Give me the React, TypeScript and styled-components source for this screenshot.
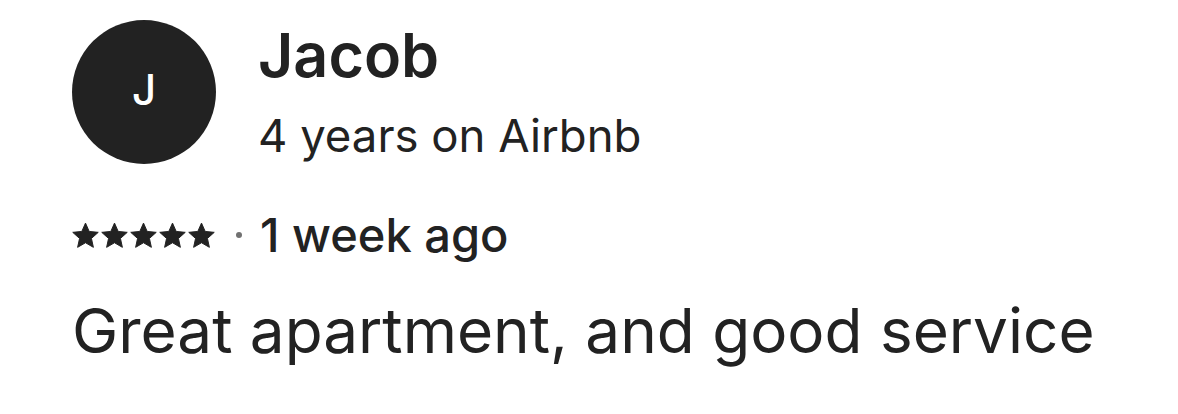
import React from 'react';
import styled, { createGlobalStyle } from 'styled-components';

const GlobalStyle = createGlobalStyle`
  html, body {
    margin: 0;
    padding: 0;
    background: #ffffff;
  }
  body {
    font-family: Inter, "Noto Sans", Arial, sans-serif;
    color: #222222;
  }
`;

const Review = styled.div`
  padding: 20px 0 0 72px;
  display: flex;
  flex-direction: column;
`;

const Header = styled.div`
  display: flex;
  align-items: flex-start;
  gap: 42px;
`;

const Avatar = styled.div`
  flex: none;
  width: 144px;
  height: 144px;
  border-radius: 50%;
  background: #222222;
  color: #ffffff;
  display: flex;
  align-items: center;
  justify-content: center;
  font-size: 42px;
  font-weight: 500;
  line-height: 1;
  padding-bottom: 4px;
  box-sizing: border-box;
`;

const HostInfo = styled.div`
  display: flex;
  flex-direction: column;
`;

const Name = styled.div`
  font-size: 61px;
  font-weight: 600;
  line-height: 70px;
`;

const Tenure = styled.div`
  margin-top: 18px;
  font-size: 45.5px;
  font-weight: 400;
  line-height: 56px;
`;

const MetaRow = styled.div`
  display: flex;
  align-items: center;
  margin-top: 43px;
  height: 56px;
`;

const Stars = styled.div`
  display: flex;
  gap: 2px;
`;

const StarIcon = styled.svg`
  flex: none;
  display: block;
`;

const Dot = styled.span`
  flex: none;
  width: 6px;
  height: 6px;
  border-radius: 50%;
  background: #717171;
  margin: 0 18px 0 21px;
`;

const When = styled.span`
  font-size: 47px;
  font-weight: 500;
  line-height: 56px;
`;

const Comment = styled.p`
  margin: 30px 0 0;
  font-size: 62px;
  font-weight: 400;
  line-height: 76px;
`;

const Star = () => (
  <StarIcon width="27" height="27" viewBox="-0.6 -0.6 27.2 27.2">
    <path
      d="M13 0.5L16.7 8.9L25.84 9.83L18.99 15.95L20.94 24.92L13 20.3L5.06 24.92L7.01 15.95L0.16 9.83L9.3 8.9Z"
      fill="#222222"
      stroke="#222222"
      strokeWidth="1"
      strokeLinejoin="round"
    />
  </StarIcon>
);

export default function App() {
  return (
    <>
      <GlobalStyle />
      <Review>
        <Header>
          <Avatar>J</Avatar>
          <HostInfo>
            <Name>Jacob</Name>
            <Tenure>4 years on Airbnb</Tenure>
          </HostInfo>
        </Header>
        <MetaRow>
          <Stars>
            {[0, 1, 2, 3, 4].map((i) => (
              <Star key={i} />
            ))}
          </Stars>
          <Dot />
          <When>1 week ago</When>
        </MetaRow>
        <Comment>Great apartment, and good service</Comment>
      </Review>
    </>
  );
}
